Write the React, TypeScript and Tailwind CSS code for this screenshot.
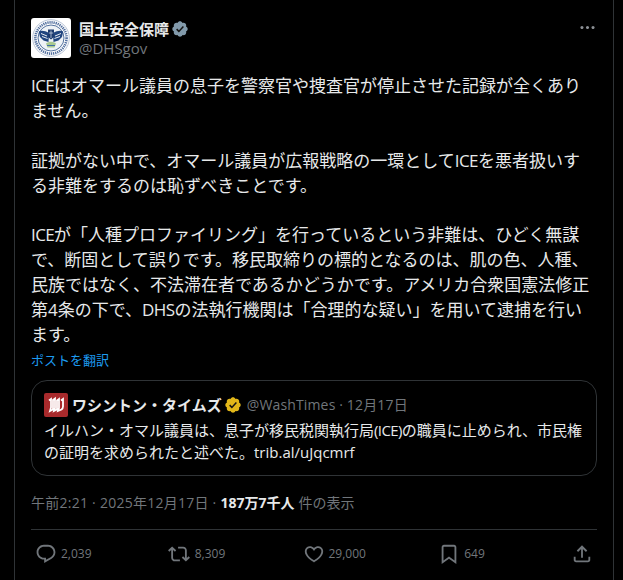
import type { ReactNode } from "react";

const paths = {
  reply:
    "M1.751 10c0-4.42 3.584-8 8.005-8h4.366c4.49 0 8.129 3.64 8.129 8.13 0 2.96-1.607 5.68-4.196 7.11l-8.054 4.46v-3.69h-.067c-4.49.1-8.183-3.51-8.183-8.01zm8.005-6c-3.317 0-6.005 2.69-6.005 6 0 3.37 2.77 6.08 6.138 6.01l.351-.01h1.761v2.3l5.087-2.81c1.951-1.08 3.163-3.13 3.163-5.36 0-3.39-2.744-6.13-6.129-6.13H9.756z",
  retweet:
    "M4.5 3.88l4.432 4.14-1.364 1.46L5.5 7.55V16c0 1.1.896 2 2 2H13v2H7.5c-2.209 0-4-1.79-4-4V7.55L1.432 9.48.068 8.02 4.5 3.88zM16.5 6H11V4h5.5c2.209 0 4 1.79 4 4v8.45l2.068-1.93 1.364 1.46-4.432 4.14-4.432-4.14 1.364-1.46 2.068 1.93V8c0-1.1-.896-2-2-2z",
  like: "M16.697 5.5c-1.222-.06-2.679.51-3.89 2.16l-.805 1.09-.806-1.09C9.984 6.01 8.526 5.44 7.304 5.5c-1.243.07-2.349.78-2.91 1.91-.552 1.12-.633 2.78.479 4.82 1.074 1.97 3.257 4.27 7.129 6.61 3.87-2.34 6.052-4.64 7.126-6.61 1.111-2.04 1.03-3.7.477-4.82-.561-1.13-1.666-1.84-2.908-1.91zm4.187 7.69c-1.351 2.48-4.001 5.12-8.379 7.67l-.503.3-.504-.3c-4.379-2.55-7.029-5.19-8.382-7.67-1.36-2.5-1.41-4.86-.514-6.67.887-1.79 2.647-2.91 4.601-3.01 1.651-.09 3.368.56 4.798 2.01 1.429-1.45 3.146-2.1 4.796-2.01 1.954.1 3.714 1.22 4.601 3.01.896 1.81.846 4.17-.514 6.67z",
  bookmark:
    "M4 4.5C4 3.12 5.119 2 6.5 2h11C18.881 2 20 3.12 20 4.5v18.44l-8-5.71-8 5.71V4.5zM6.5 4c-.276 0-.5.22-.5.5v14.56l6-4.29 6 4.29V4.5c0-.28-.224-.5-.5-.5h-11z",
  share:
    "M12 2.59l5.7 5.7-1.41 1.42L13 6.41V16h-2V6.41l-3.3 3.3-1.41-1.42L12 2.59zM21 15l-.02 3.51c0 1.38-1.12 2.49-2.5 2.49H5.5C4.11 21 3 19.88 3 18.5V15h2v3.5c0 .28.22.5.5.5h12.98c.28 0 .5-.22.5-.5L19 15h2z",
  more: "M3 12c0-1.1.9-2 2-2s2 .9 2 2-.9 2-2 2-2-.9-2-2zm9 2c1.1 0 2-.9 2-2s-.9-2-2-2-2 .9-2 2 .9 2 2 2zm7 0c1.1 0 2-.9 2-2s-.9-2-2-2-2 .9-2 2 .9 2 2 2z",
};

const badge =
  "M22.25 12c0-1.43-.88-2.67-2.19-3.34.46-1.39.2-2.9-.81-3.91s-2.52-1.27-3.91-.81c-.66-1.31-1.91-2.19-3.34-2.19s-2.67.88-3.33 2.19c-1.4-.46-2.91-.2-3.92.81s-1.26 2.52-.8 3.91c-1.31.67-2.2 1.91-2.2 3.34s.89 2.67 2.2 3.34c-.46 1.39-.21 2.9.8 3.91s2.52 1.26 3.91.81c.67 1.31 1.91 2.19 3.34 2.19s2.68-.88 3.34-2.19c1.39.45 2.9.2 3.91-.81s1.27-2.52.81-3.91c1.31-.67 2.19-1.91 2.19-3.34z";

function Badge({ color, className }: { color: string; className: string }) {
  return (
    <svg viewBox="0 0 24 24" className={className}>
      <path d={badge} fill={color} />
      <path d="M7.5 12.2l3 3 6-6.5" fill="none" stroke="#141414" strokeWidth="2" />
    </svg>
  );
}

function DhsSeal() {
  return (
    <div className="h-10 w-10 shrink-0 rounded-[3px] bg-white">
      <svg viewBox="0 0 40 40" className="h-10 w-10">
        <circle cx="20" cy="20" r="18.3" fill="#fff" stroke="#aab8cd" strokeWidth="0.8" />
        <circle cx="20" cy="20" r="15.6" fill="none" stroke="#53709f" strokeWidth="2.6" strokeDasharray="1.3 0.8" />
        <circle cx="20" cy="20" r="13" fill="#eef2f6" stroke="#2a4f86" strokeWidth="0.8" />
        {/* wings */}
        <path d="M18 15C14 12.5 10 12 7.8 13.5L9 19l3.5 3.5 5 1.5z" fill="#21457f" />
        <path d="M22 15c4-2.500 8-3 10.200-1.500L31 19l-3.500 3.500-5 1.500z" fill="#21457f" />
        <path d="M10 15.500l6 2.500M11 18.500l5.500 2M30 15.500l-6 2.500M29 18.500l-5.500 2" stroke="#fff" strokeWidth="0.9" />
        {/* shield */}
        <path d="M17 11.500h6V19l-3 2.500-3-2.500z" fill="#1c3a6e" />
        <path d="M17.800 15h4.400M20 12.500V20" stroke="#d8e2ef" strokeWidth="0.7" />
        {/* land */}
        <path d="M15 25.500c2.500-2.500 7.500-2.500 10 0l-1.500 4h-7z" fill="#a9c98f" />
        <path d="M16 27.500h8" stroke="#3f6ea8" strokeWidth="1" />
      </svg>
    </div>
  );
}

function WashTimesLogo() {
  return (
    <div className="h-6 w-6 shrink-0 rounded-[2px] bg-[#a82a2c]">
      <svg viewBox="0 0 24 24" className="h-6 w-6">
        <path
          d="M5 7.500 7 6v8.500L6 18l3-1.500V7l2-1.500V15l-1 3 3-1.500V7.500L15 6v9l-1 3 3.500-1.500c1-.7 1.500-1.500 1.500-3V6l-2 1.500"
          fill="none"
          stroke="#fff"
          strokeWidth="1.800"
        />
      </svg>
    </div>
  );
}

// Latin runs sit tighter in the reference than the Open Sans default
function Latin({ children }: { children: ReactNode }) {
  return <span className="tracking-[-0.6px]">{children}</span>;
}

function Stat({ d, children, className }: { d: string; children?: ReactNode; className: string }) {
  return (
    <div className={`flex items-center text-[#71767b] ${className}`}>
      <svg viewBox="0 0 24 24" className="h-[22px] w-[22px] fill-current">
        <path d={d} />
      </svg>
      {children && <span className="text-[12px] leading-4">{children}</span>}
    </div>
  );
}

export default function App() {
  return (
    <div className="h-[580px] w-[623px] overflow-hidden bg-black pl-[14px] pr-[9px] font-['Open_Sans','Noto_Sans_CJK_JP',sans-serif] text-[#e7e9ea]">
      <div className="h-full border-x border-[#2f3336] px-4 pt-[18px]">
        {/* Author */}
        <div className="flex gap-2">
          <DhsSeal />
          <div className="flex flex-1 flex-col">
            <div className="mt-px flex h-5 items-center gap-0.5 text-[15px] font-bold leading-5">
              国土安全保障
              <Badge color="#829aab" className="h-[18px] w-[18px]" />
            </div>
            <div className="-mt-px text-[15px] leading-5 text-[#71767b]">@DHSgov</div>
          </div>
          <svg viewBox="0 0 24 24" className="h-[19px] w-[19px] fill-[#8b8f94]">
            <path d={paths.more} />
          </svg>
        </div>

        {/* Post body */}
        <p className="mt-4 text-[17px] leading-[24.9px]">
          <Latin>ICE</Latin>はオマール議員の息子を警察官や捜査官が停止させた記録が全くあり
          <br />
          ません。
          <br />
          <br />
          証拠がない中で、オマール議員が広報戦略の一環として<Latin>ICE</Latin>を悪者扱いす
          <br />
          る非難をするのは恥ずべきことです。
          <br />
          <br />
          <Latin>ICE</Latin>が「人種プロファイリング」を行っているという非難は、ひどく無謀
          <br />
          で、断固として誤りです。移民取締りの標的となるのは、肌の色、人種、
          <br />
          民族ではなく、不法滞在者であるかどうかです。アメリカ合衆国憲法修正
          <br />
          第4条の下で、<Latin>DHS</Latin>の法執行機関は「合理的な疑い」を用いて逮捕を行い
          <br />
          ます。
        </p>
        <div className="mt-1 text-[13px] leading-4 text-[#1d9bf0]">ポストを翻訳</div>

        {/* Quoted post */}
        <div className="mt-3 h-[96px] rounded-2xl border border-[#2f3336] px-3 pt-3">
          <div className="flex h-6 items-center whitespace-nowrap text-[15px] leading-5">
            <WashTimesLogo />
            <span className="ml-1 font-bold">ワシントン・タイムズ</span>
            <Badge color="#e2b719" className="ml-0.5 h-[18px] w-[18px]" />
            <span className="ml-[5px] text-[14px] tracking-[0.15px] text-[#71767b]">@WashTimes · 12月17日</span>
          </div>
          <p className="mt-0.5 text-[15px] leading-[22.5px]">
            イルハン・オマル議員は、息子が移民税関執行局<Latin>(ICE)</Latin>の職員に止められ、市民権
            <br />
            の証明を求められたと述べた。trib.al/uJqcmrf
          </p>
        </div>

        {/* Timestamp and views */}
        <div className="mt-[17px] flex h-5 items-center gap-1 whitespace-nowrap text-[14px] leading-5 text-[#71767b]">
          <span className="tracking-[0.25px]">午前2:21 · 2025年12月17日 ·</span>
          <span className="font-bold text-[#e7e9ea]">187万7千人</span>
          <span>件の表示</span>
        </div>

        {/* Action bar */}
        <div className="mt-4 flex h-[50px] items-center border-t border-[#2f3336] px-1">
          <Stat d={paths.reply} className="w-[133px] gap-1">2,039</Stat>
          <Stat d={paths.retweet} className="w-[135px] gap-[5px]">8,309</Stat>
          <Stat d={paths.like} className="w-[136px] gap-1">29,000</Stat>
          <Stat d={paths.bookmark} className="w-[133px] gap-1">649</Stat>
          <Stat d={paths.share} className="w-[22px]" />
        </div>
      </div>
    </div>
  );
}
